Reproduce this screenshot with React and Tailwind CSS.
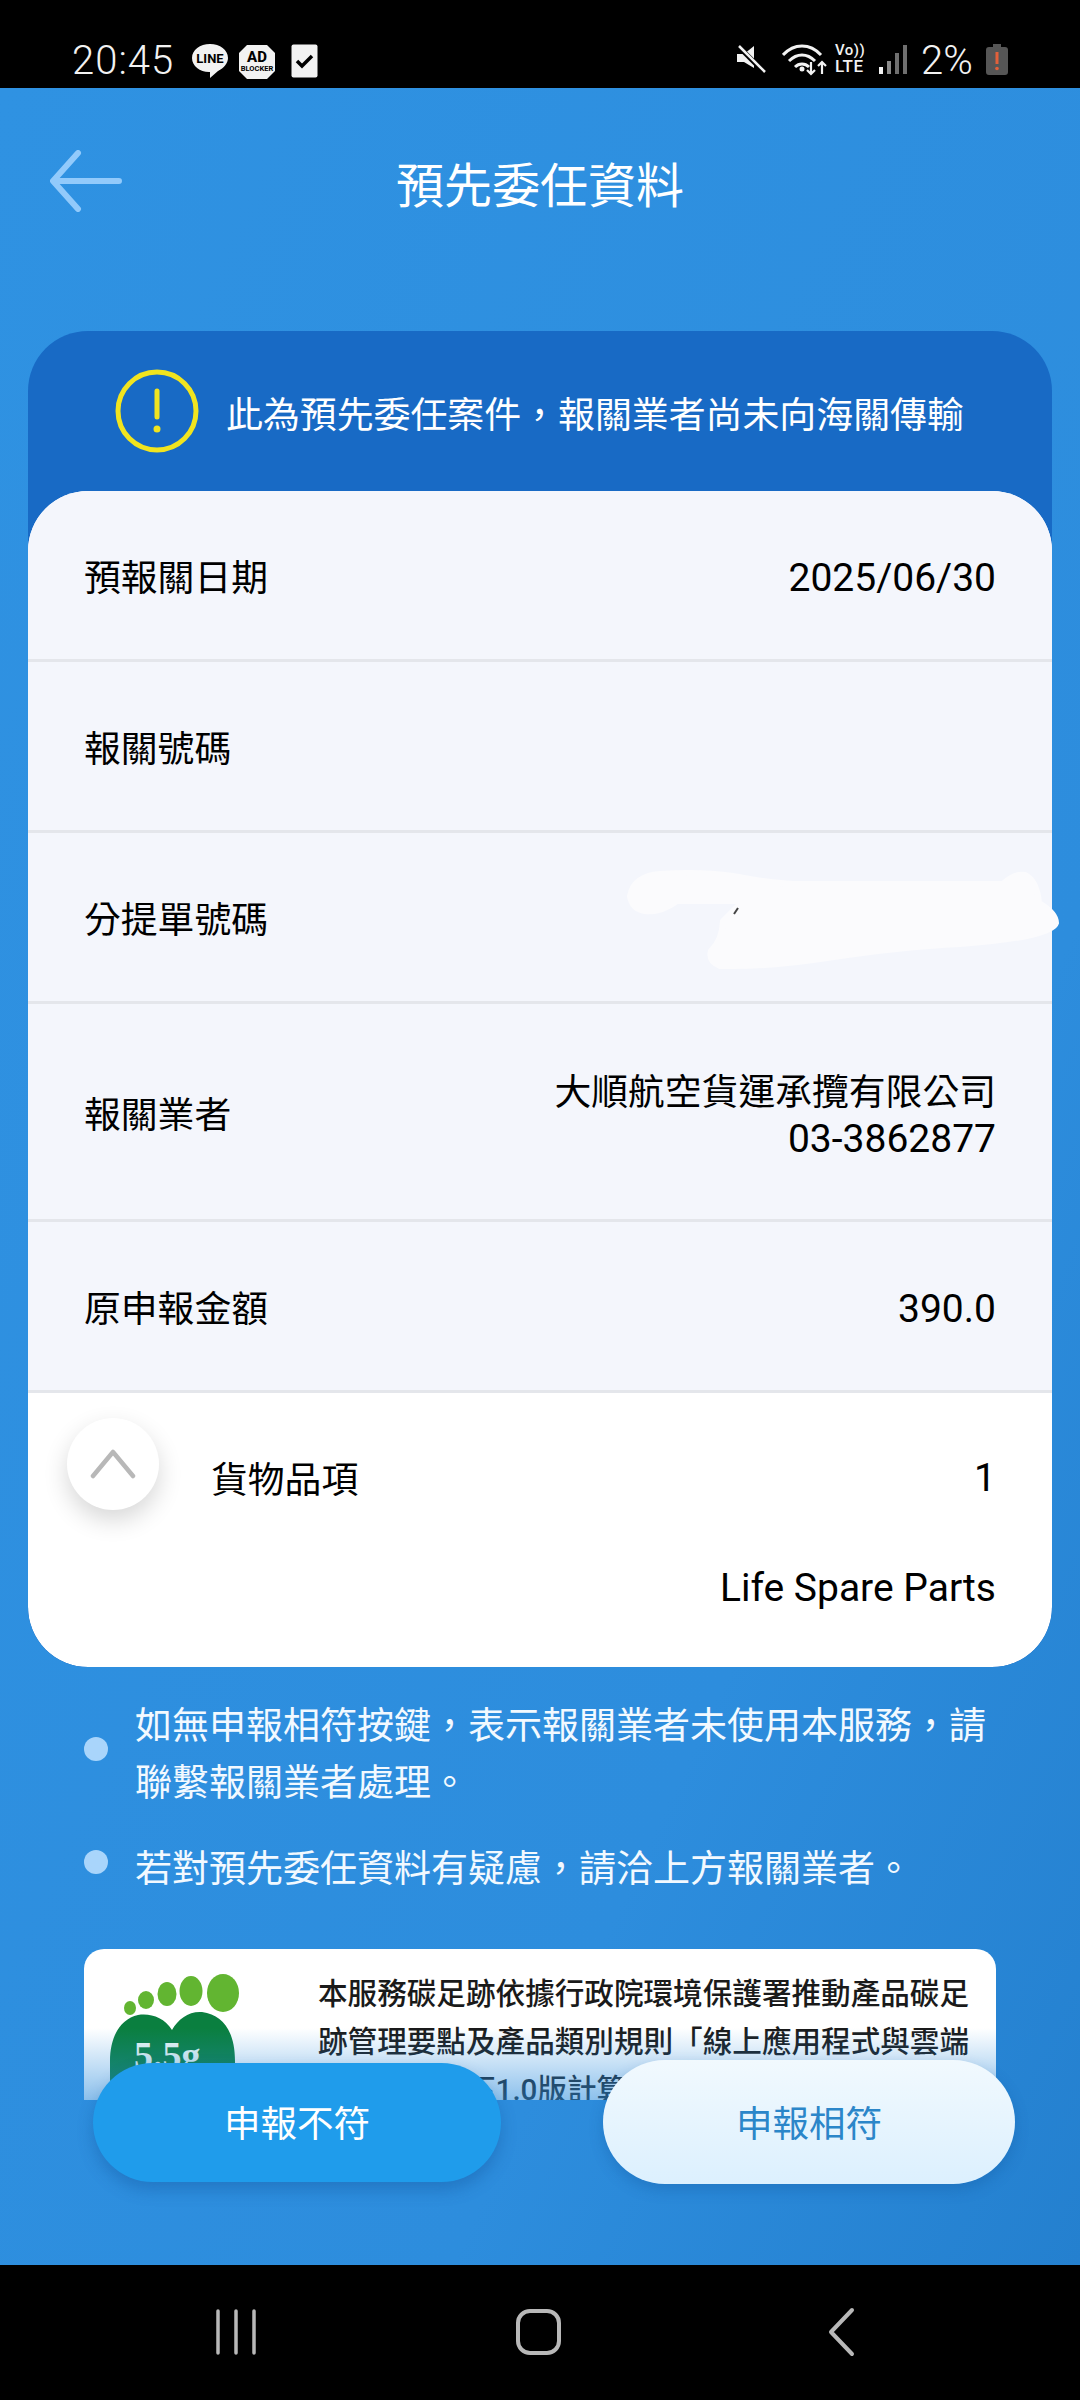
import React from "react";

const rows = [
  { label: "預報關日期", value: ["2025/06/30"] },
  { label: "報關號碼", value: [] },
  { label: "分提單號碼", value: [] },
  { label: "報關業者", value: ["大順航空貨運承攬有限公司", "03-3862877"], tall: true },
  { label: "原申報金額", value: ["390.0"] },
];

function StatusBar() {
  return (
    <div className="h-[88px] bg-black flex items-start pt-[44px] pl-[72px] pr-[72px] text-[#f2f2f2]">
      <span className="text-[40px] leading-[34px] font-light tracking-[1px] w-[119px]">20:45</span>
      <svg width="38" height="36" viewBox="0 0 38 36" className="-mt-[1px]">
        <path d="M19 1C9 1 1 7 1 15c0 8 8 14 17 14l1 0 0 6 8-7c6-3 10-8 10-13C37 7 29 1 19 1z" fill="#f2f2f2" />
        <text x="19" y="20" textAnchor="middle" fontSize="13" fontWeight="700" fill="#000" fontFamily="Roboto">LINE</text>
      </svg>
      <svg width="38" height="36" viewBox="0 0 38 36" className="ml-[9px]">
        <path d="M9 1h20l8 8v18l-8 8H9l-8-8V9z" fill="#f2f2f2" />
        <text x="19" y="18" textAnchor="middle" fontSize="15" fontWeight="800" fill="#000" fontFamily="Roboto">AD</text>
        <text x="19" y="27" textAnchor="middle" fontSize="7.5" fontWeight="700" fill="#000" fontFamily="Roboto">BLOCKER</text>
      </svg>
      <svg width="27" height="34" viewBox="0 0 27 34" className="ml-[15px]">
        <rect x="0.5" y="0.5" width="26" height="33" rx="2" fill="#f2f2f2" />
        <path d="M6 17l5 5 10-10" fill="none" stroke="#000" strokeWidth="3.5" />
      </svg>
      <div className="flex-1" />
      <svg width="30" height="30" viewBox="0 0 30 30" className="mr-[15px]">
        <path d="M0 10h7l10-8v22l-10-6H0z" fill="#f2f2f2" />
        <path d="M2 3l26 26" stroke="#000" strokeWidth="5" />
        <path d="M2 2l26 26" stroke="#f2f2f2" strokeWidth="2.5" />
      </svg>
      <svg width="46" height="32" viewBox="0 0 46 32" className="mr-[7px]">
        <path d="M1 11c11-12 27-12 38 0M7 17c8-8 18-8 26 0M13 23c4-4 10-4 14 0" fill="none" stroke="#f2f2f2" strokeWidth="3" />
        <circle cx="20" cy="25" r="2.5" fill="#f2f2f2" />
        <path d="M29 18v12M25 26l4 4 4-4M40 30V18M36 22l4-4 4 4" fill="none" stroke="#f2f2f2" strokeWidth="2.2" />
      </svg>
      <div className="w-[34px] mr-[10px] -mt-[1px] text-[15px] leading-[15px] font-medium tracking-[0.5px]">
        <div>Vo))</div>
        <div className="text-[17px] leading-[17px]">LTE</div>
      </div>
      <svg width="28" height="30" viewBox="0 0 28 30" className="mr-[14px]">
        <rect x="0" y="23" width="4" height="7" fill="#f2f2f2" />
        <rect x="8" y="17" width="4" height="13" fill="#8a8a8a" />
        <rect x="16" y="9" width="4" height="21" fill="#6f6f6f" />
        <rect x="24" y="1" width="4" height="29" fill="#6f6f6f" />
      </svg>
      <span className="text-[40px] leading-[34px] font-light w-[65px]">2%</span>
      <svg width="22" height="31" viewBox="0 0 22 31">
        <path d="M7 0h8v3h4a3 3 0 0 1 3 3v22a3 3 0 0 1-3 3H3a3 3 0 0 1-3-3V6a3 3 0 0 1 3-3h4z" fill="#565656" />
        <path d="M11 8v12" stroke="#e2603a" strokeWidth="3" />
        <circle cx="11" cy="24.5" r="1.8" fill="#e2603a" />
      </svg>
    </div>
  );
}

function Footprint() {
  return (
    <svg width="160" height="151" viewBox="0 0 160 151" className="shrink-0">
      <ellipse cx="139" cy="44" rx="16" ry="19" fill="#62b531" />
      <ellipse cx="107" cy="42" rx="11.5" ry="15" fill="#62b531" />
      <ellipse cx="83" cy="45" rx="9.5" ry="12" fill="#62b531" />
      <ellipse cx="62" cy="51" rx="8" ry="9" fill="#62b531" />
      <ellipse cx="46" cy="59" rx="6" ry="7" fill="#62b531" />
      <path d="M88 81C80 68 66 64 54 66C36 70 26 88 26 112V151H151V112C151 84 140 66 118 63C105 62 94 70 88 81z" fill="#0a7f3f" />
      <text x="50" y="119" fontSize="38" fontWeight="700" fill="#eef8f2" fontFamily="Liberation Serif">5.5g</text>
    </svg>
  );
}

export default function App() {
  return (
    <div className="w-[1080px] h-[2400px] flex flex-col overflow-hidden bg-black [font-family:Roboto,'Noto_Sans_CJK_TC',sans-serif]">
      <StatusBar />
      <div className="relative flex-1 flex flex-col bg-[linear-gradient(115deg,#2f92e2_0%,#2d8ddd_70%,#2480cf_100%)]">
        <div className="h-[194px] mb-[49px] flex items-center relative">
          <svg width="72" height="62" viewBox="0 0 72 62" className="ml-[50px] -mt-[8px]">
            <path d="M69 31H4M28 3L3 31l25 28" fill="none" stroke="#92cafb" strokeWidth="6" strokeLinecap="round" strokeLinejoin="round" />
          </svg>
          <h1 className="absolute inset-x-0 pt-[3px] text-center text-[48px] leading-[60px] text-white">預先委任資料</h1>
        </div>

        <div className="relative mx-[28px]">
          <div className="rounded-[60px] bg-[#186ac5] overflow-hidden">
            <div className="h-[160px] flex items-center pl-[87px] gap-[27px]">
              <svg width="84" height="84" viewBox="0 0 84 84">
                <circle cx="42" cy="42" r="39" fill="none" stroke="#f1e41f" strokeWidth="5" />
                <path d="M42 22v26" stroke="#f1e41f" strokeWidth="5" strokeLinecap="round" />
                <circle cx="42" cy="60" r="3.5" fill="#f1e41f" />
              </svg>
              <span className="pt-[9px] text-[36.9px] leading-[50px] text-white">{"此為預先委任案件\uFF0C報關業者尚未向海關傳輸"}</span>
            </div>
            <div className="rounded-[60px] bg-white overflow-hidden">
              {rows.map((row) => (
                <div
                  key={row.label}
                  className={`flex items-center justify-between pl-[56px] pr-[56px] bg-[#f4f6fc] border-b-[3px] border-[#e4e6eb] ${
                    row.tall ? "h-[218px] pt-[9px]" : "h-[171px] pt-[7px]"
                  }`}
                >
                  <span className="text-[36.8px] leading-[50px] text-black">{row.label}</span>
                  <div className="text-right leading-[47px] text-black">
                    {row.value.map((line) => (
                      <div key={line} className={/^[\x00-\x7f]+$/.test(line) ? "text-[39px]" : "text-[36.8px]"}>
                        {line}
                      </div>
                    ))}
                  </div>
                </div>
              ))}
              <div className="h-[274px] relative pr-[56px]">
                <div className="absolute left-[39px] top-[25px] w-[92px] h-[92px] rounded-full bg-white shadow-[0_10px_24px_rgba(0,0,0,0.16)] flex items-center justify-center">
                  <svg width="46" height="30" viewBox="0 0 46 30">
                    <path d="M3 27L23 3l20 24" fill="none" stroke="#b8b8b8" strokeWidth="4.5" strokeLinecap="round" strokeLinejoin="round" />
                  </svg>
                </div>
                <div className="flex justify-between items-center pl-[183px] pt-[63px] text-[36.8px] leading-[50px] text-black">
                  <span>貨物品項</span>
                  <span className="text-[39px] -mt-[6px]">1</span>
                </div>
                <div className="text-right text-[39px] leading-[50px] text-black mt-[57px]">Life Spare Parts</div>
              </div>
            </div>
          </div>
          {/* redaction scribble runs past the card edge, so it sits outside the clipped box */}
          <svg width="445" height="120" viewBox="0 0 445 120" className="absolute left-[592px] top-[530px]">
            <path
              d="M10 35Q14 15 40 13Q80 10 113 15Q150 22 173 23H383Q395 12 405 14Q417 20 419 42Q436 52 436 62Q432 76 340 83Q280 86 207 97Q150 106 100 105Q88 100 91 90Q102 80 103 60L120 43V40L57 40Q40 52 25 50Q12 48 10 35z"
              fill="#fbfbfd"
              stroke="#fbfbfd"
              strokeWidth="6"
              strokeLinejoin="round"
            />
            <path d="M118 47l-4 6" stroke="#444" strokeWidth="2" />
          </svg>
        </div>

        <div className="mt-[29px] flex flex-col gap-[23px] pl-[84px] pr-[90px] text-[37px] leading-[57px] text-[#f2f9ff]">
          <div className="flex items-start gap-[27px]">
            <span className="mt-[41px] w-[24px] h-[24px] rounded-full bg-[#a9d5fb] shrink-0" />
            <p className="mt-[2px]">{"如無申報相符按鍵\uFF0C表示報關業者未使用本服務\uFF0C請聯繫報關業者處理。"}</p>
          </div>
          <div className="flex items-start gap-[27px]">
            <span className="mt-[15px] w-[24px] h-[24px] rounded-full bg-[#a9d5fb] shrink-0" />
            <p className="mt-[6px]">{"若對預先委任資料有疑慮\uFF0C請洽上方報關業者。"}</p>
          </div>
        </div>

        <div className="mt-[51px] mx-[84px] h-[151px] rounded-t-[20px] bg-white overflow-hidden relative flex">
          <Footprint />
          <p className="ml-[74px] w-[665px] pt-[21px] text-[29.6px] leading-[48px] font-medium text-[#1a1a1a]">
            本服務碳足跡依據行政院環境保護署推動產品碳足跡管理要點及產品類別規則「線上應用程式與雲端服務軟體」下1.0版計算
          </p>
          <div className="absolute inset-x-0 bottom-0 h-[72px] bg-[linear-gradient(180deg,rgba(45,141,221,0)_0%,rgba(45,141,221,0.55)_100%)]" />
        </div>

        <div className="absolute left-[93px] right-[65px] top-[1972px] flex justify-between items-center">
          <button className="w-[408px] h-[119px] pt-[6px] rounded-[60px] bg-[#1f9ceb] text-white text-[36.5px] shadow-[0_8px_16px_rgba(10,70,140,0.3)]">
            申報不符
          </button>
          <button className="w-[412px] h-[124px] pt-[6px] rounded-[62px] bg-[linear-gradient(180deg,#f1f9fe_0%,#dcf0fe_100%)] text-[#2b86c9] text-[36.5px] shadow-[0_6px_14px_rgba(10,70,140,0.25)]">
            申報相符
          </button>
        </div>
      </div>

      <div className="h-[135px] bg-black flex items-center justify-center">
        <svg width="1080" height="135" viewBox="0 0 1080 135">
          <path d="M218 46v42M236 46v42M254 46v42" stroke="#b8b8b8" strokeWidth="3.5" strokeLinecap="round" />
          <rect x="518" y="46" width="41" height="42" rx="12" fill="none" stroke="#b8b8b8" strokeWidth="4" />
          <path d="M852 45l-21 22 21 22" fill="none" stroke="#b8b8b8" strokeWidth="4" strokeLinecap="round" strokeLinejoin="round" />
        </svg>
      </div>
    </div>
  );
}
